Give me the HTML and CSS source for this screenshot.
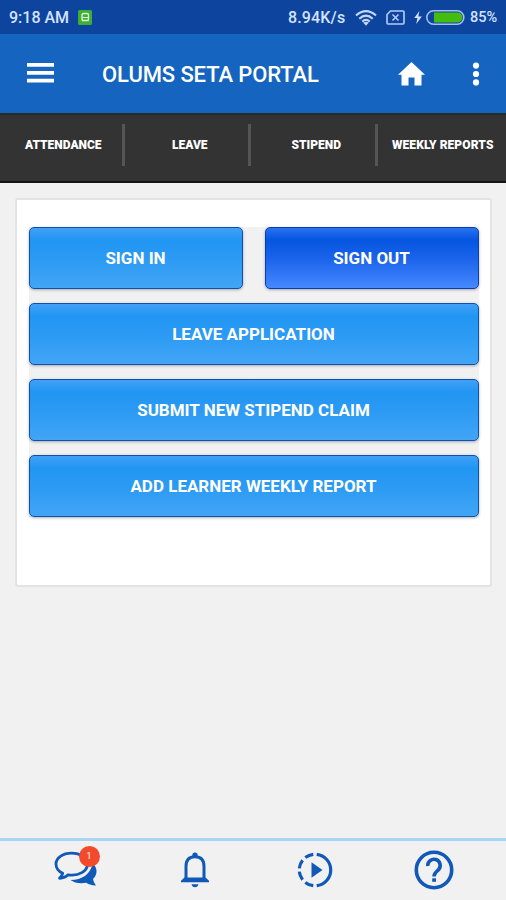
FILE: index.html
```
<!DOCTYPE html>
<html lang="en">
<head>
<meta charset="utf-8">
<title>Olums SETA Portal</title>
<link rel="stylesheet" href="styles.css">
</head>
<body>
<div class="screen">
  <div class="status">
    <span class="time">9:18 AM</span>
    <svg class="app-icon" width="14" height="15" viewBox="0 0 14 15"><rect width="14" height="15" rx="1.5" fill="#3fae35"/><rect x="4" y="3.5" width="6.5" height="7" rx="1.5" fill="none" stroke="#e4f5df" stroke-width="1.3"/><path d="M4.5 7.5h5.5M4 11.2l1-1.2M10.5 11.2l-1-1.2" stroke="#e4f5df" stroke-width="1.2"/></svg>
    <span class="speed">8.94K/s</span>
    <svg class="wifi" width="22" height="16" viewBox="0 0 22 16" fill="none" stroke="#c3d6fa" stroke-width="2.2"><path d="M1 5.5Q11-3.200 21 5.500M4.300 8.700Q11 2.700 17.700 8.700M7.300 11.600Q11 8.200 14.700 11.600"/><path d="M8.300 12.800Q11 10.800 13.700 12.800L11 15.800Z" fill="#c3d6fa" stroke="none"/></svg>
    <svg class="sim" width="19" height="15" viewBox="0 0 19 15" fill="none" stroke="#b7ccf5" stroke-width="1.6"><path d="M4.500 1H17a1 1 0 0 1 1 1v11a1 1 0 0 1-1 1H2a1 1 0 0 1-1-1V4.500Z"/><path d="M6.500 4.500l6 6M12.500 4.500l-6 6"/></svg>
    <svg class="bolt" width="8" height="13" viewBox="0 0 8 13"><path d="M5.400 0L.3 7h3.200L2.200 13 7.800 5.400H4.300Z" fill="#d5e2ff"/></svg>
    <svg class="battery" width="39" height="15" viewBox="0 0 39 15"><rect x=".8" y=".8" width="37" height="13.400" rx="6.700" fill="#0d459e" stroke="#a5bdec" stroke-width="1.600"/><path d="M8 2.600h23.500a4.900 4.900 0 0 1 0 9.800H8Z" fill="#45bd10"/></svg>
    <span class="percent">85%</span>
  </div>
  <header class="bar">
    <svg class="menu" width="27" height="20" viewBox="0 0 27 20" fill="#fff"><path d="M0 0h27v3.700H0zM0 8h27v3.700H0zM0 15.800h27v3.700H0z"/></svg>
    <h1 class="title">OLUMS SETA PORTAL</h1>
    <svg class="home" width="27" height="24" viewBox="0 0 27 24"><path d="M13.500 0L0 12.700H3.500V23.500H10.500V15.500H16.500V23.500H23.500V12.700H27Z" fill="#fff"/></svg>
    <svg class="more" width="8" height="24" viewBox="0 0 8 24" fill="#fff"><circle cx="4" cy="3.600" r="3.100"/><circle cx="4" cy="12" r="3.100"/><circle cx="4" cy="20.400" r="3.100"/></svg>
  </header>
  <nav class="tabs">
    <a class="tab"><span>ATTENDANCE</span></a>
    <a class="tab"><span>LEAVE</span></a>
    <a class="tab"><span>STIPEND</span></a>
    <a class="tab"><span>WEEKLY REPORTS</span></a>
  </nav>
  <main class="content">
    <section class="card">
      <div class="actions">
        <div class="pair">
          <button class="btn">SIGN IN</button>
          <button class="btn deep">SIGN OUT</button>
        </div>
        <button class="btn">LEAVE APPLICATION</button>
        <button class="btn">SUBMIT NEW STIPEND CLAIM</button>
        <button class="btn">ADD LEARNER WEEKLY REPORT</button>
      </div>
    </section>
  </main>
  <footer class="dock">
    <a class="item chat">
      <svg width="44" height="36" viewBox="0 0 44 36"><path d="M38.500 12C45 18 42.500 25 39 28C39.500 31 41 32.800 42 34.600C37 34.600 34 33 32.300 31.800C26 33 20 31.700 16.500 29C28 29 37 23 38.500 12Z" fill="#1159b8"/><path d="M17.500 2.200C8.500 2.200 2 7 2 13C2 17 4.500 20.400 8.700 22.200C8.300 24.500 7 25.800 5.500 27.300C9.500 27 12.500 25.500 14 23.800C25 25.500 33.500 20 33.500 13C33.500 7 26.500 2.200 17.500 2.200Z" fill="#f1f1f1" stroke="#1159b8" stroke-width="2.800" stroke-linejoin="round"/></svg>
      <span class="badge">1</span>
    </a>
    <a class="item bell">
      <svg width="30" height="36" viewBox="0 0 30 36"><path d="M6 27V14.500C6 8 9.500 4.800 15 4.800S24 8 24 14.500V27" fill="none" stroke="#1159b8" stroke-width="3"/><path d="M15 0.500a2.700 2.700 0 0 1 2.700 2.700V5.500H12.300V3.200A2.700 2.700 0 0 1 15 .5ZM4.500 25.500h21l3.500 3.300V30.200H1V28.800ZM11.500 32.300h7c-.5 2-1.700 3-3.500 3s-3-1-3.500-3Z" fill="#1159b8"/></svg>
    </a>
    <a class="item play">
      <svg width="36" height="36" viewBox="0 0 36 36"><path d="M19.700 2.300A15.800 15.800 0 0 1 19.700 33.700M16.300 33.700A15.800 15.800 0 0 1 8.300 30.400M5.600 27.800A15.800 15.800 0 0 1 2.300 19.700M2.300 16.300A15.800 15.800 0 0 1 5.600 8.200M8.300 5.600A15.800 15.800 0 0 1 16.300 2.300" fill="none" stroke="#1159b8" stroke-width="3.200"/><path d="M14.500 10.300V25.700L25.500 18Z" fill="#1159b8"/></svg>
    </a>
    <a class="item help">
      <svg width="40" height="40" viewBox="0 0 40 40" fill="none" stroke="#1159b8"><circle cx="20" cy="20" r="17.700" stroke-width="3.600"/><path d="M13.800 16A6.200 6.200 0 1 1 24.700 19.500C22.500 21.800 20 22.800 20 26.600" stroke-width="3.600"/><path d="M18.200 28.300h3.800v3.500h-3.800z" fill="#1159b8" stroke="none"/></svg>
    </a>
  </footer>
</div>
</body>
</html>
```
FILE: styles.css
```
* { box-sizing: border-box; }
body { margin: 0; font-family: Roboto, "Liberation Sans", sans-serif; background: #f1f1f1; }
svg { display: block; flex: none; }
.screen { width: 506px; height: 900px; display: flex; flex-direction: column; overflow: hidden; }
.status { height: 34px; flex: none; background: #0d459e; color: #d5e2ff; display: flex; align-items: center; padding: 1px 0 0 9px; font-size: 16px; font-weight: 500; white-space: nowrap; }
.time { width: 69px; }
.speed { margin-left: 196px; width: 67px; letter-spacing: .15px; }
.sim { margin-left: 8.500px; }
.bolt { margin-left: 9px; }
.battery { margin-left: 4.500px; }
.percent { margin-left: 5px; font-size: 14.500px; }
.bar { height: 79px; flex: none; background: #1565c0; color: #fff; display: flex; align-items: center; padding-left: 26.500px; }
.menu { margin-top: -1px; }
.title { margin: 2px 0 0 48.500px; width: 296px; font-size: 22px; letter-spacing: -.1px; line-height: 26px; font-weight: 500; white-space: nowrap; }
.more { margin-left: 46.500px; }
.tabs { height: 70px; flex: none; background: #333; border-top: 2px solid #262b2b; border-bottom: 2px solid #151515; display: grid; grid-template-columns: repeat(4, 126.500px); }
.tab { display: flex; justify-content: center; margin: 9px 2px 15px 0; border-right: 3px solid #555; color: #fff; font-size: 12px; font-weight: 900; line-height: 42px; white-space: nowrap; }
.tab:last-child { border-right: 0; margin-right: 0; }
.tab span { margin-left: 5px; }
.tab:last-child span { margin-left: 0; letter-spacing: .1px; }
.content { flex: 1; padding: 15px 14px 0 15px; }
.card { height: 389px; background: #fff; border: 2px solid #e3e3e3; border-radius: 3px; padding: 27px 11.500px 0; }
.actions { display: grid; grid-auto-rows: 62px; gap: 13.900px; background: #f1f1f1; }
.pair { display: grid; grid-template-columns: 1fr 1fr; gap: 22px; }
.btn { height: 62px; margin: 0; padding: 0; border: 1.500px solid #0f4fae; border-radius: 5px; background: linear-gradient(#42a0f5, #2196f3 20%, #2b9af4 50%, #42a5f5); box-shadow: 0 1px 3px rgba(0, 0, 0, .3); color: #fff; font: 700 17px Roboto, "Liberation Sans", sans-serif; }
.deep { background: linear-gradient(#2a72f2, #0455df 20%, #1e66ec 55%, #4589ff); border-color: #0a3cb4; }
.dock { height: 62px; flex: none; border-top: 3px solid #a9d5f5; display: flex; align-items: flex-start; }
.item { position: relative; }
.chat { margin: 10px 0 0 54px; }
.badge { position: absolute; left: 24.500px; top: -5.500px; width: 21px; height: 21px; border-radius: 50%; background: #f24a2b; color: #fff; font-size: 9px; line-height: 21px; text-align: center; }
.bell { margin: 11px 0 0 82px; }
.play { margin: 10.500px 0 0 87px; }
.help { margin: 8.500px 0 0 81px; }
```
